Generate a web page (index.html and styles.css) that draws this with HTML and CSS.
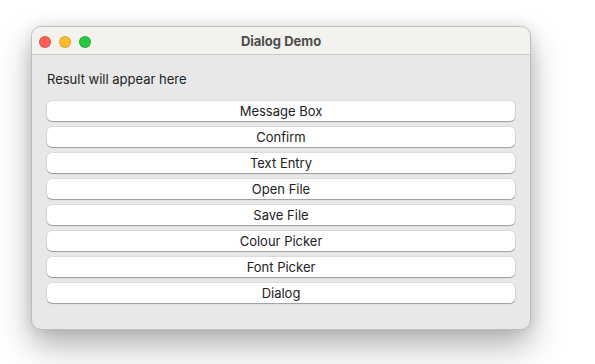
FILE: index.html
```html
<!DOCTYPE html>
<html lang="en">
<head>
  <meta charset="UTF-8" />
  <title>Dialog Demo</title>
  <link rel="stylesheet" href="styles.css">
</head>
<body>
  <div class="window">
    <div class="titlebar">
      <div class="lights">
        <span class="light close"></span>
        <span class="light min"></span>
        <span class="light max"></span>
      </div>
      <div class="title">Dialog Demo</div>
    </div>
    <div class="content">
      <p class="result">Result will appear here</p>
      <div class="buttons">
        <button>Message Box</button>
        <button>Confirm</button>
        <button>Text Entry</button>
        <button>Open File</button>
        <button>Save File</button>
        <button>Colour Picker</button>
        <button>Font Picker</button>
        <button>Dialog</button>
      </div>
    </div>
  </div>
</body>
</html>
```

FILE: styles.css
```css
html, body {
  height: 100%;
}

body {
  margin: 0;
  min-height: 364px;
  background: #ffffff;
  font-family: 'Inter', 'Liberation Sans', sans-serif;
  overflow: hidden;
}

.window {
  width: 498px;
  height: 302px;
  margin: 26px 0 0 31px;
  background: #e8e8e8;
  border: 1px solid #bdbdbd;
  border-radius: 10px;
  overflow: hidden;
  box-shadow: 0 16px 32px rgba(0, 0, 0, 0.3), 0 0 14px rgba(0, 0, 0, 0.1);
}

.titlebar {
  height: 27px;
  background: #f3f2ef;
  border-bottom: 1px solid #c8c8c8;
  display: flex;
  align-items: center;
  position: relative;
}

.lights {
  display: flex;
  gap: 8px;
  padding-left: 7px;
  padding-top: 2px;
}

.light {
  box-sizing: border-box;
  width: 12px;
  height: 12px;
  border-radius: 50%;
  border: 0.5px solid rgba(0, 0, 0, 0.12);
}

.close { background: #fe5f57; }
.min { background: #febc2e; }
.max { background: #28c840; }

.title {
  position: absolute;
  left: 0;
  right: 0;
  text-align: center;
  font-size: 13px;
  font-weight: 700;
  color: #4d4d4d;
  pointer-events: none;
}

.content {
  padding: 0 15px;
}

.result {
  margin: 16px 0 0;
  height: 17px;
  font-size: 13px;
  color: #222;
  line-height: 17px;
}

.buttons {
  margin-top: 13px;
  display: flex;
  flex-direction: column;
  gap: 5px;
}

button {
  height: 20px;
  width: 468px;
  margin-bottom: 1px;
  background: #ffffff;
  border: none;
  border-radius: 5px;
  box-shadow: 0 0 0 0.5px rgba(0, 0, 0, 0.12), 0 1px 1px rgba(0, 0, 0, 0.28);
  font-family: 'Inter', 'Liberation Sans', sans-serif;
  font-size: 13px;
  color: #222;
  padding: 0;
}
```
